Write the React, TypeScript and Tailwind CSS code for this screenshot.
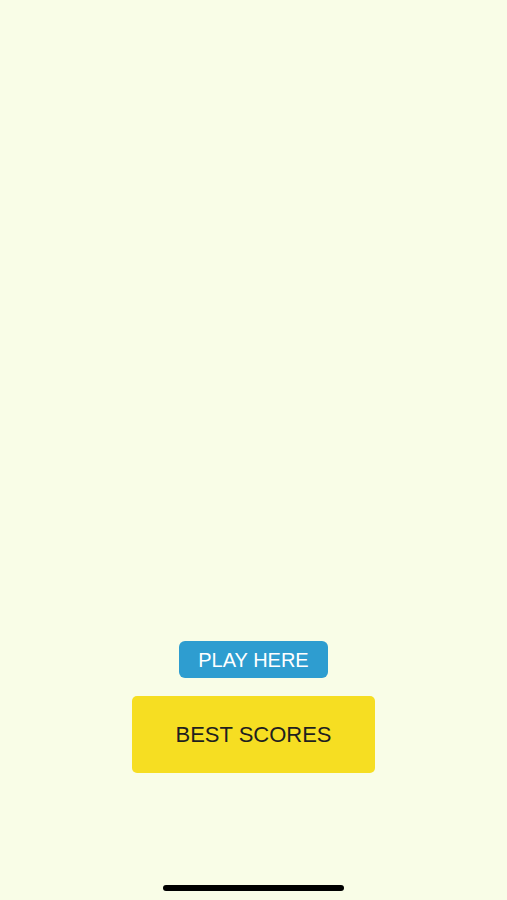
export default function App() {
  return (
    <div
      className="flex h-[900px] w-full flex-col items-center bg-[#f9fde7]"
      style={{ fontFamily: '"Liberation Sans", Arial, sans-serif' }}
    >
      <div className="flex-1" />
      <button className="flex h-[37px] w-[149px] items-center justify-center rounded-[6px] bg-[#2e9dd0] text-[20px] text-white">
        PLAY HERE
      </button>
      <button className="mt-[18px] flex h-[77px] w-[243px] items-center justify-center rounded-[5px] bg-[#f6de22] text-[22px] text-[#1f1f1f]">
        BEST SCORES
      </button>
      <div className="mb-[9px] mt-[112px] h-[6px] w-[181px] rounded-full bg-black" />
    </div>
  );
}
